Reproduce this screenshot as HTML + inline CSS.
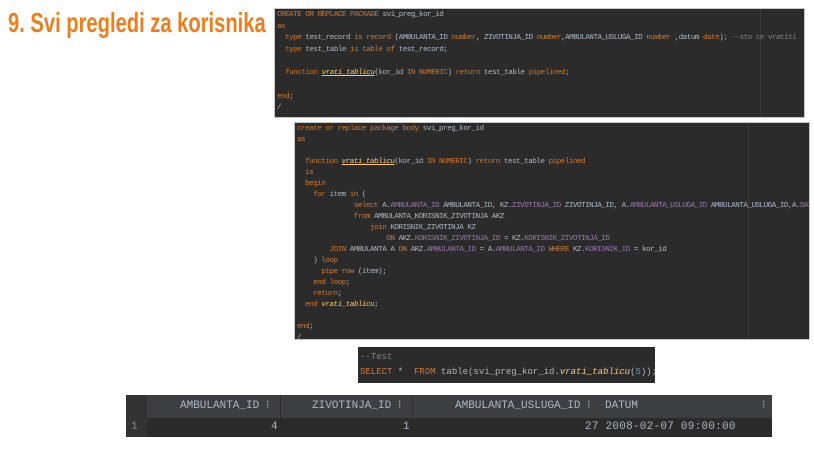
<!DOCTYPE html>
<html><head><meta charset="utf-8"><style>
body{margin:0;width:814px;height:458px;background:#fff;position:relative;overflow:hidden;font-family:"Liberation Mono",monospace}
.t{position:absolute;left:8px;top:7px;font:bold 28px "Liberation Sans Narrow","Liberation Sans",sans-serif;color:#ef7d1a;white-space:nowrap;transform:scaleX(0.72);transform-origin:0 0}
.box{position:absolute;background:#2b2b2b;border:1px solid #c8c8c8;overflow:hidden;white-space:pre;color:#a9b7c6;font-size:7.6px;letter-spacing:-0.5px}
.box .l{position:absolute;left:2px}
.k{color:#cc7832}.p{color:#9876aa}.c{color:#808080}.f{color:#ffc66d;font-style:italic;text-decoration:underline}.n{color:#6897bb}
.vl{position:absolute;top:0;bottom:0;width:1px;background:#3a3a3a}
.tb{position:absolute;left:126px;top:395px;width:646px;height:42px;font-size:11px;color:#a9b7c6}
.tb div{position:absolute;white-space:pre;line-height:13px}
</style></head><body>
<div class="t">9. Svi pregledi za korisnika</div>

<div class="box" style="left:274px;top:8px;width:529px;height:108px">
<div class="vl" style="left:485px"></div>
<div class="l" style="top:2px"><span class="k">CREATE OR REPLACE PACKAGE</span> svi_preg_kor_id</div>
<div class="l" style="top:14px"><span class="k">as</span></div>
<div class="l" style="top:25px">  <span class="k">type</span> test_record <span class="k">is record</span> (AMBULANTA_ID <span class="k">number</span>, ZIVOTINJA_ID <span class="k">number</span>,AMBULANTA_USLUGA_ID <span class="k">number</span> ,datum <span class="k">date</span>); <span class="c">--sto ce vratiti</span></div>
<div class="l" style="top:37px">  <span class="k">type</span> test_table <span class="k">is table of</span> test_record;</div>
<div class="l" style="top:60px">  <span class="k">function</span> <span class="f">vrati_tablicu</span>(kor_id <span class="k">IN NUMERIC</span>) <span class="k">return</span> test_table <span class="k">pipelined</span>;</div>
<div class="l" style="top:84px"><span class="k">end</span>;</div>
<div class="l" style="top:95px">/</div>
</div>

<div class="box" style="left:294px;top:122px;width:514px;height:216px">
<div class="vl" style="left:453px"></div>
<div class="l" style="top:2px"><span class="k">create or replace package body</span> svi_preg_kor_id</div>
<div class="l" style="top:13px"><span class="k">as</span></div>
<div class="l" style="top:35px">  <span class="k">function</span> <span class="f">vrati_tablicu</span>(kor_id <span class="k">IN NUMERIC</span>) <span class="k">return</span> test_table <span class="k">pipelined</span></div>
<div class="l" style="top:46px">  <span class="k">is</span></div>
<div class="l" style="top:57px">  <span class="k">begin</span></div>
<div class="l" style="top:68px">    <span class="k">for</span> item <span class="k">in</span> (</div>
<div class="l" style="top:79px">              <span class="k">select</span> A.<span class="p">AMBULANTA_ID</span> AMBULANTA_ID, KZ.<span class="p">ZIVOTINJA_ID</span> ZIVOTINJA_ID, A.<span class="p">AMBULANTA_USLUGA_ID</span> AMBULANTA_USLUGA_ID,A.<span class="p">DATUM</span> DATUM</div>
<div class="l" style="top:90px">              <span class="k">from</span> AMBULANTA_KORISNIK_ZIVOTINJA AKZ</div>
<div class="l" style="top:101px">                  <span class="k">join</span> KORISNIK_ZIVOTINJA KZ</div>
<div class="l" style="top:112px">                      <span class="k">ON</span> AKZ.<span class="p">KORISNIK_ZIVOTINJA_ID</span> = KZ.<span class="p">KORISNIK_ZIVOTINJA_ID</span></div>
<div class="l" style="top:123px">        <span class="k">JOIN</span> AMBULANTA A <span class="k">ON</span> AKZ.<span class="p">AMBULANTA_ID</span> = A.<span class="p">AMBULANTA_ID</span> <span class="k">WHERE</span> KZ.<span class="p">KORISNIK_ID</span> = kor_id</div>
<div class="l" style="top:134px">    ) <span class="k">loop</span></div>
<div class="l" style="top:145px">      <span class="k">pipe row</span> (item);</div>
<div class="l" style="top:156px">    <span class="k">end loop</span>;</div>
<div class="l" style="top:167px">    <span class="k">return</span>;</div>
<div class="l" style="top:178px">  <span class="k">end</span> <span style="color:#ffc66d;font-style:italic">vrati_tablicu</span>;</div>
<div class="l" style="top:200px"><span class="k">end</span>;</div>
<div class="l" style="top:211px">/</div>
</div>

<div class="box" style="left:358px;top:347px;width:297px;height:36px;border:none;font-size:9px;letter-spacing:0">
<div class="l" style="top:5px"><span class="c">--Test</span></div>
<div class="l" style="top:20px"><span class="k">SELECT</span> *  <span class="k">FROM</span> table(svi_preg_kor_id.<span style="color:#ffc66d;font-style:italic">vrati_tablicu</span>(<span class="n">5</span>));</div>
</div>

<div class="tb">
<div style="left:0;top:0;width:646px;height:23px;background:#3c3f41"></div>
<div style="left:0;top:0;width:21px;height:23px;background:#313335"></div>
<div style="left:21px;top:23px;width:625px;height:19px;background:#2b2b2b"></div>
<div style="left:0;top:23px;width:21px;height:19px;background:#313335"></div>
<div style="left:154px;top:0;width:1px;height:42px;background:#2b2b2b"></div>
<div style="left:286px;top:0;width:1px;height:42px;background:#2b2b2b"></div>
<div style="left:54px;top:5px">AMBULANTA_ID ⁝</div>
<div style="left:186px;top:5px">ZIVOTINJA_ID ⁝</div>
<div style="left:329px;top:5px">AMBULANTA_USLUGA_ID ⁝</div>
<div style="left:479px;top:5px">DATUM</div>
<div style="left:636px;top:5px">⁝</div>
<div style="left:5px;top:26px;color:#888">1</div>
<div style="left:145px;top:26px">4</div>
<div style="left:277px;top:26px">1</div>
<div style="left:459px;top:26px;letter-spacing:0.25px">27 2008-02-07 09:00:00</div>
</div>
</body></html>
